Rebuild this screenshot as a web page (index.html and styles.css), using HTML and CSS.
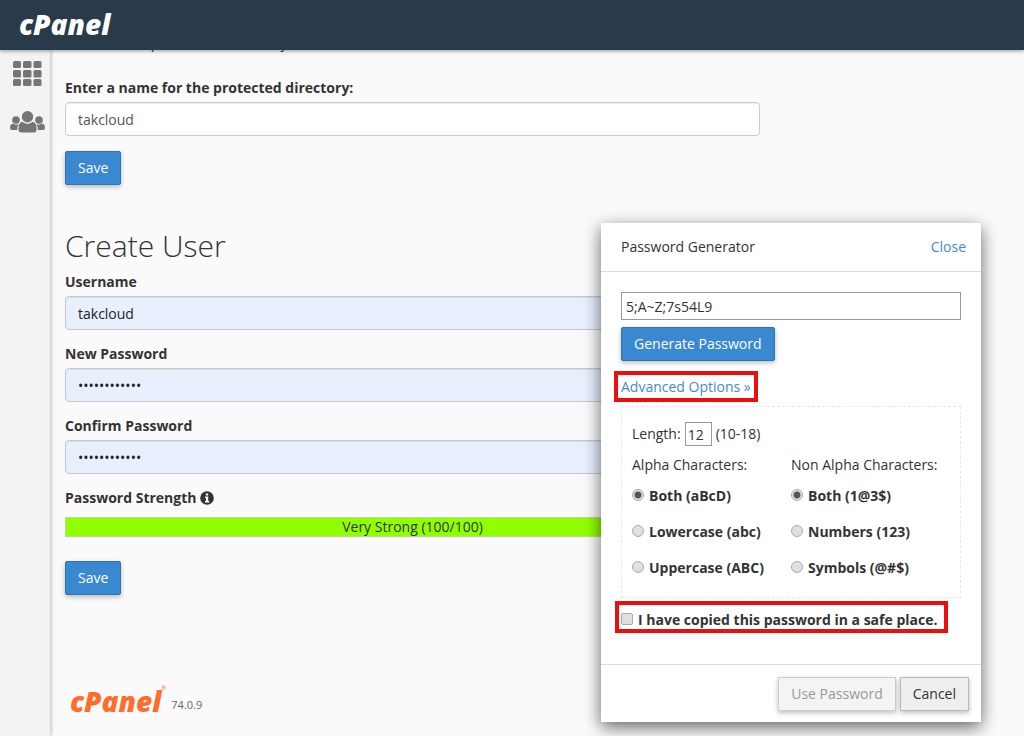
FILE: index.html
```html
<!DOCTYPE html>
<html lang="en">
<head>
<meta charset="utf-8">
<title>cPanel - Directory Privacy</title>
<link rel="stylesheet" href="styles.css">
</head>
<body>
<header class="topbar"><a class="brand" href="#">cPanel</a></header>
<div class="shell">
  <nav class="sidebar" aria-label="Main">
    <a class="nav-link" href="#" aria-label="Home">
      <svg width="29" height="26" viewBox="0 0 29 26" fill="#757575">
        <rect x="0" y="0" width="8" height="7" rx="1.5"/><rect x="10" y="0" width="8.500" height="7" rx="1.5"/><rect x="20.500" y="0" width="8" height="7" rx="1.5"/>
        <rect x="0" y="9" width="8" height="7.500" rx="1.5"/><rect x="10" y="9" width="8.500" height="7.500" rx="1.5"/><rect x="20.500" y="9" width="8" height="7.500" rx="1.5"/>
        <rect x="0" y="18" width="8" height="7" rx="1.5"/><rect x="10" y="18" width="8.500" height="7" rx="1.5"/><rect x="20.500" y="18" width="8" height="7" rx="1.5"/>
      </svg>
    </a>
    <a class="nav-link" href="#" aria-label="User Manager">
      <svg width="35" height="22" viewBox="0 0 35 22" fill="#757575">
        <circle cx="17.500" cy="5.700" r="5.700"/>
        <path d="M12.300 10.800Q17.500 15 22.700 10.800Q26.600 11.500 26.600 18.500Q26.600 21.500 23.600 21.500H11.400Q8.400 21.500 8.400 18.500Q8.400 11.500 12.300 10.800Z"/>
        <circle cx="6" cy="9" r="3.800"/><circle cx="29" cy="9" r="3.800"/>
        <path d="M3 12.600Q6 14.600 8.800 12.900Q7.300 15 7.200 19H2Q0 19 0 17Q0 13 3 12.600Z"/>
        <path d="M32 12.600Q29 14.600 26.200 12.900Q27.700 15 27.800 19H33Q35 19 35 17Q35 13 32 12.600Z"/>
      </svg>
    </a>
  </nav>
  <main class="content">
    <form class="form">
      <label class="check protect"><input type="checkbox" checked>Password protect this directory.</label>
      <div class="field">
        <label for="dirname">Enter a name for the protected directory:</label>
        <input class="control" id="dirname" type="text" value="takcloud">
      </div>
      <button class="btn primary" type="button">Save</button>
    </form>
    <form class="form user-form">
      <h2>Create User</h2>
      <div class="field">
        <label for="username">Username</label>
        <input class="control filled" id="username" type="text" value="takcloud">
      </div>
      <div class="field">
        <label for="pw">New Password</label>
        <input class="control filled" id="pw" type="password" value="abcdefghijkl">
      </div>
      <div class="field">
        <label for="pw2">Confirm Password</label>
        <input class="control filled" id="pw2" type="password" value="abcdefghijkl">
      </div>
      <div class="strength-label">Password Strength
        <svg width="14" height="14" viewBox="0 0 14 14"><circle cx="7" cy="7" r="6.800" fill="#333"/><path d="M5.800 2.500H8.200V4.500H5.800ZM5 5.600H8.200V9.900H9.200V11.400H4.900V9.900H5.900V7.100H5Z" fill="#fff"/></svg>
      </div>
      <div class="strength-bar">Very Strong (100/100)</div>
      <button class="btn primary" type="button">Save</button>
    </form>
    <footer class="footer"><span class="brand orange">cPanel<sup>®</sup></span><span class="version">74.0.9</span></footer>
  </main>
</div>
<section class="dialog" role="dialog" aria-labelledby="dlg-title">
  <div class="dialog-head"><span id="dlg-title">Password Generator</span><a class="close" href="#">Close</a></div>
  <div class="dialog-body">
    <input class="plain generated" type="text" value="5;A~Z;7s54L9" aria-label="Generated password">
    <button class="btn primary" type="button">Generate Password</button>
    <div class="advanced"><a class="marked" href="#">Advanced Options »</a></div>
    <div class="options">
      <div class="length"><label for="len">Length:</label><input class="plain" id="len" type="text" value="12"><span>(10-18)</span></div>
      <div class="columns">
        <div class="choices" role="group" aria-labelledby="alpha">
          <span id="alpha">Alpha Characters:</span>
          <label class="check"><input type="radio" name="alpha" checked>Both (aBcD)</label>
          <label class="check"><input type="radio" name="alpha">Lowercase (abc)</label>
          <label class="check"><input type="radio" name="alpha">Uppercase (ABC)</label>
        </div>
        <div class="choices" role="group" aria-labelledby="nonalpha">
          <span id="nonalpha">Non Alpha Characters:</span>
          <label class="check"><input type="radio" name="nonalpha" checked>Both (1@3$)</label>
          <label class="check"><input type="radio" name="nonalpha">Numbers (123)</label>
          <label class="check"><input type="radio" name="nonalpha">Symbols (@#$)</label>
        </div>
      </div>
    </div>
    <label class="check marked copied"><input type="checkbox">I have copied this password in a safe place.</label>
  </div>
  <div class="dialog-foot">
    <button class="btn neutral" type="button" disabled>Use Password</button>
    <button class="btn neutral" type="button">Cancel</button>
  </div>
</section>
</body>
</html>
```
FILE: styles.css
```css
* { box-sizing: border-box; }
body {
  margin: 0;
  min-height: 100vh;
  display: flex;
  flex-direction: column;
  background: #fafafa;
  color: #333;
  font: 14px/20px "Open Sans", sans-serif;
}
a { color: #428bca; text-decoration: none; }
input, button { font: inherit; color: inherit; margin: 0; }
svg { display: block; }

.topbar {
  position: relative;
  z-index: 2;
  height: 50px;
  display: flex;
  align-items: center;
  padding: 0 19px 2px;
  background: #293a4a;
  box-shadow: 0 1px 4px rgba(0, 0, 0, .4);
}
.brand { color: #fff; font: italic 800 28px/32px "Open Sans", sans-serif; }
.brand.orange { color: #ff6c2c; }
.brand sup { font: 6px/6px "Open Sans", sans-serif; vertical-align: top; }

.shell { flex: 1; display: flex; }
.sidebar {
  width: 50px;
  flex: none;
  display: flex;
  flex-direction: column;
  align-items: center;
  gap: 24px;
  padding: 11px 0 0 5px;
  background: #f3f3f3;
  box-shadow: 1px 0 4px rgba(0, 0, 0, .25);
}
.content { flex: 1; min-width: 0; padding: 0 15px; }
.form { max-width: 695px; }
.user-form { margin-top: 44px; }

.check { display: flex; align-items: center; gap: 4px; font-weight: 700; }
.check input {
  appearance: none;
  flex: none;
  width: 12px;
  height: 12px;
  margin: 0 1px 3px 0;
  border: 1px solid #aaa;
  border-radius: 2px;
  background: linear-gradient(#e2e2e2, #dedede);
}
.check input[type="radio"] { border-radius: 50%; }
.check input[type="radio"]:checked { background: radial-gradient(circle, #555 3px, #e2e2e2 4px); }
.check.protect { margin-top: -17px; gap: 6px; font-weight: 400; }

.field { margin-bottom: 14px; }
.field label, .strength-label { display: block; margin-bottom: 4px; font-weight: 700; }
.protect + .field { margin: 25px 0 15px; }
.control {
  display: block;
  width: 100%;
  height: 34px;
  padding: 6px 12px;
  border: 1px solid #ccc;
  border-radius: 4px;
  background: #fff;
  color: #555;
  box-shadow: inset 0 1px 1px rgba(0, 0, 0, .07);
}
.control.filled { background: #e8f0fe; border-color: #c2c7d0; color: #222; }
h2 { margin: 0 0 10px; font-size: 30px; line-height: 33px; font-weight: 300; }
.strength-label { display: flex; align-items: center; gap: 4px; margin-bottom: 9px; }
.strength-bar {
  height: 20px;
  margin-bottom: 24px;
  border: 1px solid #b5d991;
  background: #90ff00;
  text-align: center;
  line-height: 18px;
}
.footer { display: flex; align-items: center; gap: 5px; margin: 90px 0 0 5px; }
.version { padding-top: 8px; font-size: 11px; color: #666; }

.btn {
  height: 34px;
  padding: 0 12px;
  border: 1px solid #2e74b2;
  border-radius: 2px;
  box-shadow: 0 2px 5px rgba(0, 0, 0, .26);
  white-space: nowrap;
}
.primary { display: block; background: #3a88d0; color: #fff; }
.neutral { background: #eee; border-color: #b8b8b8; border-radius: 0; }
.neutral:disabled { background: #f4f4f4; border-color: #ccc; color: #999; }

.dialog {
  position: absolute;
  z-index: 3;
  top: 223px;
  right: 43px;
  width: 380px;
  background: #fff;
  box-shadow: 0 5px 16px rgba(0, 0, 0, .6);
}
.dialog-head {
  display: flex;
  justify-content: space-between;
  padding: 14px 15px 14px 20px;
  border-bottom: 1px solid #ddd;
}
.dialog-body { padding: 20px 20px 34px; }
.plain { border: 1px solid #999; background: #fff; padding: 0 4px; }
.generated { display: block; width: 100%; height: 28px; margin-bottom: 7px; }
.advanced { margin: 16px 0 9px; }
.marked { position: relative; }
.marked::after { content: ""; position: absolute; inset: -6px -7px; border: 4px solid #ee0c0c; }
.options { padding: 15px 10px 19px; border: 1px dashed #e8e8e8; }
.length { display: flex; align-items: center; gap: 4px; margin-bottom: 9px; }
.length input { width: 27px; height: 24px; padding: 0 2px; }
.columns { display: grid; grid-template-columns: 159px 1fr; }
.choices { display: grid; gap: 16px; }
.choices span { margin-bottom: -5px; }
.copied { width: fit-content; margin-top: 12px; }
.copied::after { inset: -9px -11px -3px -6px; }
.dialog-foot { display: flex; justify-content: flex-end; gap: 4px; padding: 12px 12px 11px; border-top: 1px solid #ddd; }
```
